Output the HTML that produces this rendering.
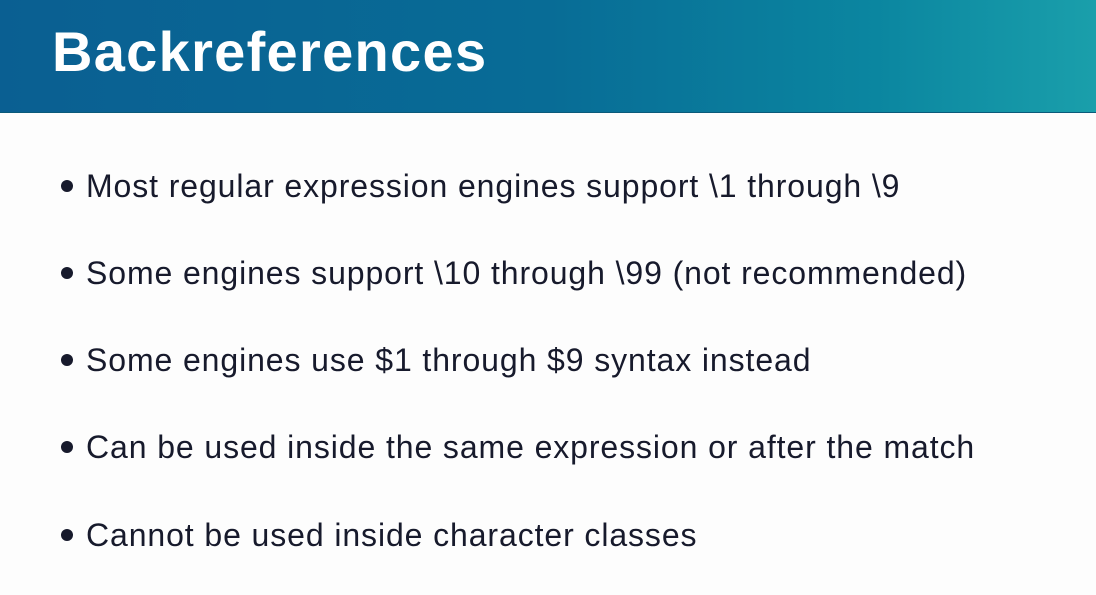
<!DOCTYPE html>
<html><head><meta charset="utf-8"><style>
html,body{margin:0;padding:0;width:1096px;height:595px;overflow:hidden;background:#fdfdfd;}
.hdr{position:absolute;left:0;top:0;width:1096px;height:112px;background:linear-gradient(90deg,#0a5f92 0%,#086c96 50%,#0b86a0 80%,#1a9fab 100%);border-bottom:1px solid #0b5a7a;}
.t{position:absolute;left:52px;top:17px;font:bold 56px "Liberation Sans",sans-serif;color:#fff;letter-spacing:1.3px;line-height:70px;}
.b{position:absolute;left:86px;font:32px "Liberation Sans",sans-serif;color:#171a2c;line-height:40px;white-space:nowrap;letter-spacing:0.9px;}
.d{position:absolute;left:61px;width:12px;height:12px;border-radius:50%;background:#171a2c;}
</style></head><body>
<div class="hdr"><div class="t">Backreferences</div></div>
<div class="d" style="top:180px"></div><div class="b" style="top:166px">Most regular expression engines support \1 through \9</div>
<div class="d" style="top:267px"></div><div class="b" style="top:253px">Some engines support \10 through \99 (not recommended)</div>
<div class="d" style="top:354px"></div><div class="b" style="top:340px">Some engines use $1 through $9 syntax instead</div>
<div class="d" style="top:441px"></div><div class="b" style="top:427px">Can be used inside the same expression or after the match</div>
<div class="d" style="top:529px"></div><div class="b" style="top:515px">Cannot be used inside character classes</div>
</body></html>
